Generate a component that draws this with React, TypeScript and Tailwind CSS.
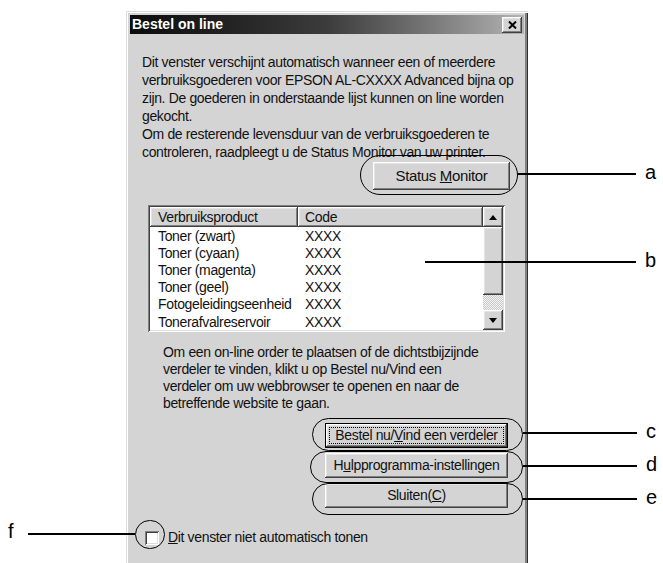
const raised =
  "bg-[#d4d4d4] shadow-[inset_-1px_-1px_0_#404040,inset_1px_1px_0_#ffffff,inset_-2px_-2px_0_#808080,inset_2px_2px_0_#e4e4e4]";
const sunken =
  "shadow-[inset_1px_1px_0_#808080,inset_-1px_-1px_0_#ffffff,inset_2px_2px_0_#404040,inset_-2px_-2px_0_#dfdfdf]";
const ui = "font-['Liberation_Sans',Arial,sans-serif] text-[14px] tracking-[-0.35px] text-[#111]";

const rows = [
  "Toner (zwart)",
  "Toner (cyaan)",
  "Toner (magenta)",
  "Toner (geel)",
  "Fotogeleidingseenheid",
  "Tonerafvalreservoir",
];

function Arrow({ up }: { up?: boolean }) {
  return (
    <svg width="8" height="5" viewBox="0 0 8 5">
      <polygon points={up ? "0,5 8,5 4,0" : "0,0 8,0 4,5"} fill="#000" />
    </svg>
  );
}

function Callouts() {
  const line = "absolute h-[2px] bg-black";
  const label = "absolute font-['Liberation_Sans',sans-serif] text-[20px] leading-none text-black";
  return (
    <>
      {/* a */}
      <div className="absolute left-[360px] top-[155px] h-[40px] w-[158px] rounded-[20px] border-[1.5px] border-black" />
      <div className={`${line} left-[518px] top-[173px] w-[118px]`} />
      <span className={`${label} left-[645px] top-[162px]`}>a</span>
      {/* b */}
      <div className={`${line} left-[425px] top-[261px] w-[211px]`} />
      <span className={`${label} left-[645px] top-[250px]`}>b</span>
      {/* c d e */}
      <div className="absolute left-[312px] top-[418px] h-[33px] w-[211px] rounded-[17px] border-[1.5px] border-black" />
      <div className="absolute left-[310px] top-[451px] h-[32px] w-[213px] rounded-[16px] border-[1.5px] border-black" />
      <div className="absolute left-[312px] top-[483px] h-[32px] w-[211px] rounded-[16px] border-[1.5px] border-black" />
      <div className={`${line} left-[523px] top-[432px] w-[114px]`} />
      <div className={`${line} left-[523px] top-[465px] w-[114px]`} />
      <div className={`${line} left-[523px] top-[498px] w-[114px]`} />
      <span className={`${label} left-[646px] top-[421px]`}>c</span>
      <span className={`${label} left-[646px] top-[454px]`}>d</span>
      <span className={`${label} left-[646px] top-[487px]`}>e</span>
      {/* f */}
      <div className="absolute left-[135px] top-[520px] h-[29px] w-[30px] rounded-full border-[1.5px] border-black" />
      <div className={`${line} left-[28px] top-[533px] w-[107px]`} />
      <span className={`${label} left-[8px] top-[521px]`}>f</span>
    </>
  );
}

export default function App() {
  return (
    <div className="relative h-[563px] w-[663px] overflow-hidden bg-white">
      <div className="pl-[126px] pt-[11px]">
        <div
          className={`flex h-[560px] w-[402px] flex-col bg-[#d4d4d4] p-[4px] shadow-[inset_1px_1px_0_#dcdcdc,inset_2px_2px_0_#ffffff,inset_-1px_-1px_0_#303030,inset_-3px_-3px_0_#808080] ${ui}`}
        >
          {/* title bar */}
          <div className="flex h-[19px] items-center justify-between bg-gradient-to-r from-[#0c0c0c] via-[#3c3c3c] to-[#b4b4b4] pl-[2px] pr-[2px]">
            <span className="font-['Liberation_Sans',sans-serif] text-[14px] font-bold tracking-normal text-white">
              Bestel on line
            </span>
            <div className={`flex h-[16px] w-[20px] items-center justify-center ${raised}`}>
              <svg width="9" height="8" viewBox="0 0 9 8">
                <path d="M1 0.5 L8 7.5 M8 0.5 L1 7.5" stroke="#000" strokeWidth="2" />
              </svg>
            </div>
          </div>

          <p className="ml-[12px] mt-[19px] whitespace-nowrap leading-[18px]">
            Dit venster verschijnt automatisch wanneer een of meerdere
            <br />
            verbruiksgoederen voor EPSON AL-CXXXX Advanced bijna op
            <br />
            zijn. De goederen in onderstaande lijst kunnen on line worden
            <br />
            gekocht.
            <br />
            Om de resterende levensduur van de verbruiksgoederen te
            <br />
            controleren, raadpleegt u de Status Monitor van uw printer.
          </p>

          <div className={`ml-auto mr-[14px] mt-[1px] flex h-[28px] w-[137px] items-center justify-center ${raised}`}>
            <span className="whitespace-nowrap text-[15px]">
              Status <span className="underline">M</span>onitor
            </span>
          </div>

          {/* list view */}
          <div className={`ml-[18px] mt-[15px] flex h-[127px] w-[357px] bg-white p-[2px] ${sunken}`}>
            <div className="flex flex-1 flex-col overflow-hidden">
              <div className="flex h-[20px] shrink-0">
                <div className={`flex w-[148px] items-center pl-[8px] ${raised}`}>Verbruiksproduct</div>
                <div className={`flex flex-1 items-center pl-[7px] ${raised}`}>Code</div>
              </div>
              {rows.map((r) => (
                <div key={r} className="flex h-[17.2px] shrink-0 items-center leading-none">
                  <span className="w-[155px] whitespace-nowrap pl-[8px]">{r}</span>
                  <span>XXXX</span>
                </div>
              ))}
            </div>
            <div className="flex w-[20px] flex-col">
              <div className={`flex h-[20px] items-center justify-center ${raised}`}>
                <Arrow up />
              </div>
              <div className={`h-[68px] ${raised}`} />
              <div className="h-[15px] bg-[repeating-conic-gradient(#c8c8c8_0_25%,#f4f4f4_0_50%)] bg-[length:2px_2px]" />
              <div className={`flex h-[20px] items-center justify-center ${raised}`}>
                <Arrow />
              </div>
            </div>
          </div>

          <p className="ml-[33px] mt-[12px] whitespace-nowrap leading-[17px]">
            Om een on-line order te plaatsen of de dichtstbijzijnde
            <br />
            verdeler te vinden, klikt u op Bestel nu/Vind een
            <br />
            verdeler om uw webbrowser te openen en naar de
            <br />
            betreffende website te gaan.
          </p>

          <div className="ml-auto mr-[16px] mt-[11px] flex w-[183px] flex-col gap-[5px]">
            <div className={`flex h-[25px] items-center justify-center border border-black p-[3px] ${raised}`}>
              <div className="flex h-full w-full items-center justify-center border border-dotted border-black">
                <span className="whitespace-nowrap">
                  Bestel nu/<span className="underline">V</span>ind een verdeler
                </span>
              </div>
            </div>
            <div className={`flex h-[25px] items-center justify-center ${raised}`}>
              <span className="whitespace-nowrap">
                H<span className="underline">u</span>lpprogramma-instellingen
              </span>
            </div>
            <div className={`flex h-[25px] items-center justify-center ${raised}`}>
              <span className="whitespace-nowrap">
                Sluiten(<span className="underline">C</span>)
              </span>
            </div>
          </div>

          <div className="ml-[15px] mt-[19px] flex items-center gap-[9px]">
            <div className={`h-[14px] w-[14px] bg-white ${sunken}`} />
            <span className="whitespace-nowrap">
              <span className="underline">D</span>it venster niet automatisch tonen
            </span>
          </div>
        </div>
      </div>
      <Callouts />
    </div>
  );
}
